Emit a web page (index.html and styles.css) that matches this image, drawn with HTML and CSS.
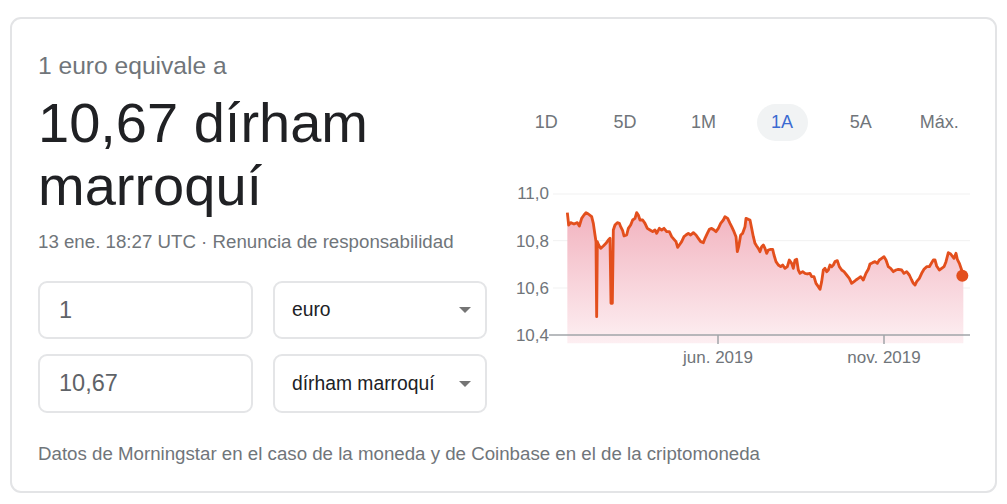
FILE: index.html
```html
<!DOCTYPE html>
<html lang="es">
<head>
<meta charset="utf-8">
<title>Conversor</title>
<link rel="stylesheet" href="styles.css">
</head>
<body>
<div class="card">
  <div class="main">
    <div class="left">
      <div class="eq">1 euro equivale a</div>
      <div class="big">10,67 dírham<br>marroquí</div>
      <div class="date">13 ene. 18:27 UTC · Renuncia de responsabilidad</div>
      <div class="form">
        <div class="field num">1</div>
        <div class="field sel"><span>euro</span><span class="arrow"></span></div>
        <div class="field num">10,67</div>
        <div class="field sel"><span>dírham marroquí</span><span class="arrow"></span></div>
      </div>
    </div>
    <div class="right">
      <div class="tabs">
        <div class="tab">1D</div>
        <div class="tab">5D</div>
        <div class="tab">1M</div>
        <div class="tab"><span class="pill">1A</span></div>
        <div class="tab">5A</div>
        <div class="tab">Máx.</div>
      </div>
      <svg class="chart" width="495" height="205" viewBox="0 0 495 205">
        <defs>
          <linearGradient id="fillg" gradientUnits="userSpaceOnUse" x1="0" y1="125" x2="0" y2="520">
            <stop offset="0" stop-color="#f2b3bf"/>
            <stop offset="1" stop-color="#fdeff2"/>
          </linearGradient>
        </defs>
        <g class="grid">
          <line x1="53" y1="24" x2="470" y2="24"/>
          <line x1="53" y1="70.7" x2="470" y2="70.7"/>
          <line x1="53" y1="118" x2="470" y2="118"/>
        </g>
        <g transform="scale(0.33333)">
          <path fill="url(#fillg)" d="M202,128 L206,165 212,158 222,162 232,158 238,168 245,145 252,135 258,128 265,132 275,140 280,160 285,195 288,215 290,440 292,215 296,225 302,235 310,228 318,220 325,210 330,205 333,400 337,400 340,180 345,165 352,158 358,160 362,170 368,182 372,198 380,195 385,175 392,165 398,150 405,145 410,128 415,135 420,150 428,150 435,160 442,175 450,180 458,185 465,180 470,190 478,175 485,180 492,175 500,185 508,185 515,200 522,208 528,215 533,232 538,225 545,215 552,200 558,195 565,190 572,195 580,188 588,195 595,205 602,215 610,218 615,205 622,190 628,178 635,175 642,180 648,185 655,175 662,160 670,150 675,140 683,145 690,160 695,170 702,185 708,200 712,245 716,230 722,195 728,190 735,170 738,145 745,148 750,150 755,175 760,200 765,220 770,228 775,235 780,245 785,230 790,225 795,235 800,250 805,240 812,238 818,238 822,255 828,275 835,285 842,290 848,285 855,295 862,290 868,270 875,280 880,295 885,270 890,268 895,300 900,310 908,305 915,310 922,312 930,310 935,320 942,320 948,340 955,350 960,358 965,335 970,300 975,295 980,305 985,300 990,285 995,290 1000,285 1005,275 1012,272 1018,290 1025,300 1032,305 1040,315 1048,325 1055,340 1062,335 1068,330 1075,325 1082,320 1090,330 1098,310 1105,298 1110,282 1118,278 1125,275 1132,280 1138,270 1145,265 1152,260 1158,270 1165,290 1172,295 1180,305 1188,300 1195,298 1205,300 1212,310 1220,305 1228,315 1235,330 1240,340 1245,345 1250,335 1258,325 1265,310 1272,298 1280,290 1288,290 1295,278 1300,270 1305,270 1310,288 1318,300 1325,295 1332,290 1338,275 1345,248 1352,252 1358,260 1362,265 1368,250 1372,268 1378,280 1385,300 1390,318 L1390,520 L202,520 Z"/>
          <path class="line" d="M202,128 L206,165 212,158 222,162 232,158 238,168 245,145 252,135 258,128 265,132 275,140 280,160 285,195 288,215 290,440 292,215 296,225 302,235 310,228 318,220 325,210 330,205 333,400 337,400 340,180 345,165 352,158 358,160 362,170 368,182 372,198 380,195 385,175 392,165 398,150 405,145 410,128 415,135 420,150 428,150 435,160 442,175 450,180 458,185 465,180 470,190 478,175 485,180 492,175 500,185 508,185 515,200 522,208 528,215 533,232 538,225 545,215 552,200 558,195 565,190 572,195 580,188 588,195 595,205 602,215 610,218 615,205 622,190 628,178 635,175 642,180 648,185 655,175 662,160 670,150 675,140 683,145 690,160 695,170 702,185 708,200 712,245 716,230 722,195 728,190 735,170 738,145 745,148 750,150 755,175 760,200 765,220 770,228 775,235 780,245 785,230 790,225 795,235 800,250 805,240 812,238 818,238 822,255 828,275 835,285 842,290 848,285 855,295 862,290 868,270 875,280 880,295 885,270 890,268 895,300 900,310 908,305 915,310 922,312 930,310 935,320 942,320 948,340 955,350 960,358 965,335 970,300 975,295 980,305 985,300 990,285 995,290 1000,285 1005,275 1012,272 1018,290 1025,300 1032,305 1040,315 1048,325 1055,340 1062,335 1068,330 1075,325 1082,320 1090,330 1098,310 1105,298 1110,282 1118,278 1125,275 1132,280 1138,270 1145,265 1152,260 1158,270 1165,290 1172,295 1180,305 1188,300 1195,298 1205,300 1212,310 1220,305 1228,315 1235,330 1240,340 1245,345 1250,335 1258,325 1265,310 1272,298 1280,290 1288,290 1295,278 1300,270 1305,270 1310,288 1318,300 1325,295 1332,290 1338,275 1345,248 1352,252 1358,260 1362,265 1368,250 1372,268 1378,280 1385,300 1390,318"/>
          <circle class="dot" cx="1387" cy="317" r="18"/>
        </g>
        <g class="axis">
          <line x1="49" y1="165" x2="470" y2="165"/>
          <line x1="218" y1="165" x2="218" y2="174"/>
          <line x1="384" y1="165" x2="384" y2="174"/>
        </g>
        <g class="labels">
          <text x="49" y="29" text-anchor="end">11,0</text>
          <text x="49" y="76.7" text-anchor="end">10,8</text>
          <text x="49" y="124" text-anchor="end">10,6</text>
          <text x="49" y="170.7" text-anchor="end">10,4</text>
          <text x="218" y="193" text-anchor="middle">jun. 2019</text>
          <text x="384" y="193" text-anchor="middle">nov. 2019</text>
        </g>
      </svg>
    </div>
  </div>
  <div class="foot">Datos de Morningstar en el caso de la moneda y de Coinbase en el de la criptomoneda</div>
</div>
</body>
</html>
```
FILE: styles.css
```css
html, body {
  margin: 0;
  padding: 0;
  background: #ffffff;
}
body {
  font-family: "Liberation Sans", Arial, sans-serif;
  color: #202124;
}
.card {
  box-sizing: border-box;
  margin: 17px 10px 0 10px;
  width: 987px;
  height: 476px;
  border: 2px solid #e3e4e6;
  border-radius: 11px;
  padding: 33px 0 0 26px;
}
.main {
  display: flex;
  gap: 13px;
}
.left {
  width: 449px;
  flex: none;
}
.eq {
  font-size: 24.6px;
  line-height: 28px;
  color: #70757a;
}
.big {
  margin-top: 11px;
  font-size: 56px;
  line-height: 63px;
  color: #202124;
}
.date {
  margin-top: 13px;
  font-size: 18.7px;
  line-height: 24px;
  color: #70757a;
}
.form {
  margin-top: 27px;
  display: grid;
  grid-template-columns: 215px 214px;
  grid-template-rows: 58px 59px;
  column-gap: 20px;
  row-gap: 15px;
}
.field {
  box-sizing: border-box;
  border: 2px solid #e4e5e7;
  border-radius: 9px;
  display: flex;
  align-items: center;
}
.num {
  padding-left: 19px;
  font-size: 23.5px;
  color: #5f6368;
}
.sel {
  padding: 0 14px 0 17px;
  font-size: 19.3px;
  color: #202124;
  justify-content: space-between;
}
.arrow {
  width: 0;
  height: 0;
  border-left: 6px solid transparent;
  border-right: 6px solid transparent;
  border-top: 6px solid #757575;
}
.right {
  width: 495px;
  flex: none;
  padding-top: 52px;
}
.tabs {
  display: flex;
  padding-left: 7px;
  height: 37px;
}
.tab {
  width: 78.6px;
  flex: none;
  display: flex;
  align-items: center;
  justify-content: center;
  font-size: 18px;
  color: #70757a;
}
.pill {
  width: 51px;
  height: 37px;
  border-radius: 19px;
  background: #f1f3f4;
  color: #3b6bd1;
  display: flex;
  align-items: center;
  justify-content: center;
}
.chart {
  display: block;
  margin-top: 29px;
}
.grid line {
  stroke: #f1f1f1;
  stroke-width: 1;
}
.line {
  fill: none;
  stroke: #e34f1d;
  stroke-width: 8.5;
  stroke-linejoin: round;
}
.dot {
  fill: #e34f1d;
}
.axis line {
  stroke: #a0a4a8;
  stroke-width: 1.5;
}
.labels text {
  font-family: "Liberation Sans", Arial, sans-serif;
  font-size: 17px;
  fill: #70757a;
}
.foot {
  margin-top: 29px;
  font-size: 18.7px;
  line-height: 24px;
  color: #70757a;
}
```
